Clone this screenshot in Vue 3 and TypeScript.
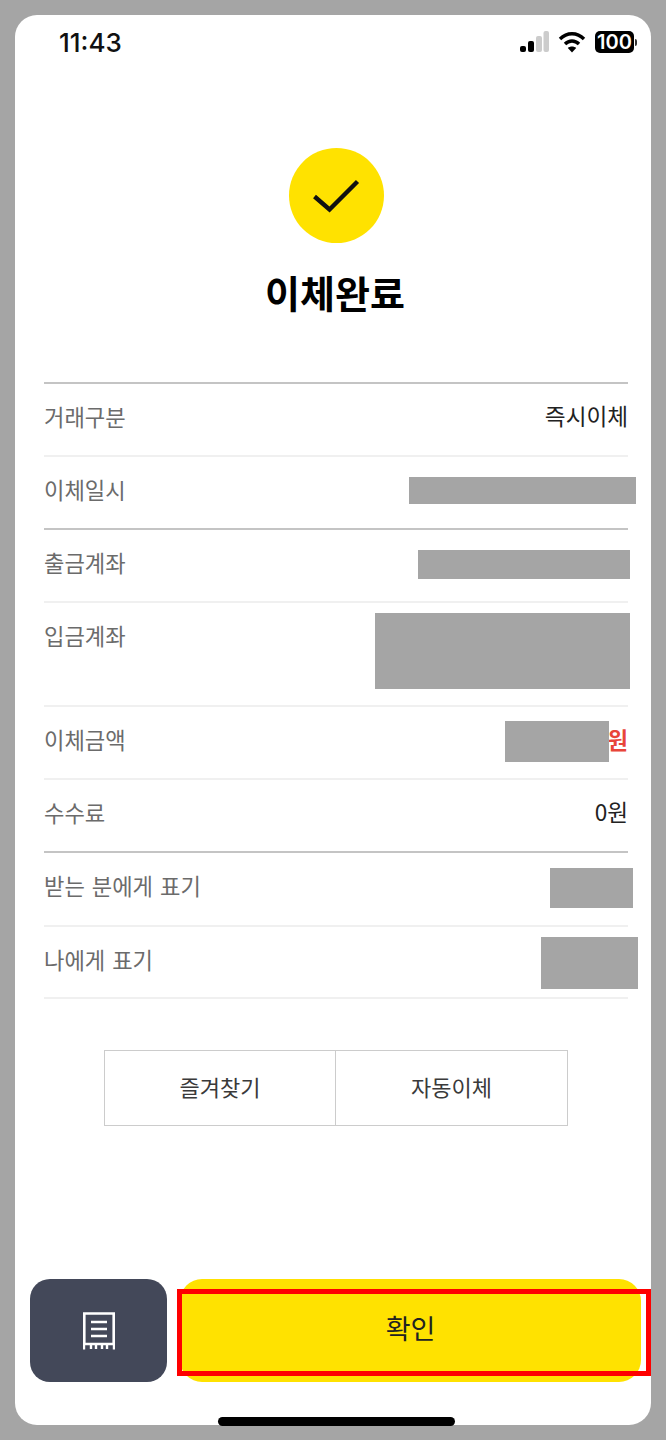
<script setup lang="ts">
interface Row {
  label: string
  value?: string
  tall?: boolean
  strong?: boolean
  line: 'dark' | 'light'
  mask?: 'date' | 'from' | 'to' | 'amount' | 'them' | 'me'
}

const rows: Row[] = [
  { label: '거래구분', value: '즉시이체', line: 'light' },
  { label: '이체일시', mask: 'date', line: 'dark' },
  { label: '출금계좌', mask: 'from', line: 'light' },
  { label: '입금계좌', mask: 'to', tall: true, line: 'light' },
  { label: '이체금액', value: '원', strong: true, mask: 'amount', line: 'light' },
  { label: '수수료', value: '0원', line: 'dark' },
  { label: '받는 분에게 표기', mask: 'them', line: 'light' },
  { label: '나에게 표기', mask: 'me', line: 'light' },
]
</script>

<template>
  <div class="screen">
    <div class="phone">
      <div class="status">
        <span class="time">11:43</span>
        <div class="status-icons">
          <svg width="30" height="22" viewBox="0 0 30 22">
            <rect x="1" y="15" width="6" height="6" rx="2" fill="#000" />
            <rect x="9" y="10" width="6" height="11" rx="2" fill="#000" />
            <rect x="17" y="5" width="6" height="16" rx="2" fill="#ccc" />
            <rect x="24.5" y="0" width="5.5" height="21" rx="2" fill="#ccc" />
          </svg>
          <svg class="wifi" width="28" height="22" viewBox="0 0 28 22">
            <path d="M2 8 C9 1 19 1 26 8" fill="none" stroke="#000" stroke-width="3.4" />
            <path d="M7 13 C11 9 17 9 21 13" fill="none" stroke="#000" stroke-width="3.4" />
            <path d="M14 21.5 L9.8 17 C12 15 16 15 18.2 17 Z" fill="#000" />
          </svg>
          <div class="battery"><span>100</span></div>
          <i class="battery-tip"></i>
        </div>
      </div>

      <div class="check">
        <svg width="50" height="40" viewBox="0 0 50 40">
          <path d="M2.5 20.5 L17.5 33.5 L45.5 5.5" fill="none" stroke="#111" stroke-width="4.4" />
        </svg>
      </div>
      <h1 class="title">이체완료</h1>

      <div class="list">
        <div
          v-for="row in rows"
          :key="row.label"
          class="row"
          :class="[row.line, { tall: row.tall }]"
        >
          <span class="label">{{ row.label }}</span>
          <span v-if="row.value" class="value" :class="{ strong: row.strong }">{{ row.value }}</span>
          <div v-if="row.mask" class="mask" :class="row.mask"></div>
        </div>
      </div>

      <div class="actions">
        <button class="action" type="button">즐겨찾기</button>
        <button class="action" type="button">자동이체</button>
      </div>

      <div class="footer">
        <button class="receipt" type="button">
          <svg width="32" height="38" viewBox="0 0 32 38">
            <path d="M1.3 1.5 H30.7 V32 H1.3 Z" fill="none" stroke="#fff" stroke-width="2.6" />
            <path d="M1 32 V37.5 M8 32 V37 M13 32 V37 M19 32 V37 M24 32 V37 M31 32 V37.5" stroke="#fff" stroke-width="2.4" />
            <path d="M8 10 H24 M8 17 H24 M8 24 H24" stroke="#fff" stroke-width="2.6" />
          </svg>
        </button>
        <button class="confirm" type="button">확인</button>
      </div>

      <div class="home"></div>
    </div>
    <div class="highlight"></div>
  </div>
</template>

<style>
body {
  background: #a5a5a5;
}
</style>

<style scoped>
.screen {
  position: relative;
  width: 666px;
  height: 1440px;
  padding: 15px;
  box-sizing: border-box;
  background: #a5a5a5;
  font-family: "Noto Sans CJK KR", "Noto Sans", sans-serif;
}

.phone {
  position: relative;
  display: flex;
  flex-direction: column;
  height: 1410px;
  background: #fff;
  border-radius: 22px;
}

.status {
  display: flex;
  justify-content: space-between;
  align-items: center;
  height: 54px;
  padding: 0 14px 0 44px;
}

.time {
  font-family: Inter, "Liberation Sans", sans-serif;
  font-size: 26px;
  font-weight: 500;
  color: #111;
}

.status-icons {
  display: flex;
  align-items: center;
}

.wifi {
  margin-left: 9px;
}

.battery {
  display: flex;
  align-items: center;
  justify-content: center;
  width: 39px;
  height: 22px;
  margin-left: 9px;
  background: #000;
  border-radius: 5px;
}

.battery span {
  font-family: Inter, "Liberation Sans", sans-serif;
  font-size: 20px;
  font-weight: 600;
  line-height: 1;
  color: #fff;
}

.battery-tip {
  width: 2px;
  height: 7px;
  margin-left: 1px;
  background: #333;
  border-radius: 0 2px 2px 0;
}

.check {
  display: flex;
  align-items: center;
  justify-content: center;
  align-self: center;
  width: 95px;
  height: 95px;
  margin: 79px 0 0 7px;
  background: #ffe200;
  border-radius: 50%;
}

.title {
  margin: 22px 0 0 4px;
  font-size: 38px;
  font-weight: 700;
  line-height: 54px;
  text-align: center;
  color: #000;
}

.list {
  margin: 63px 23px 0 29px;
  border-top: 2px solid #c4c4c4;
}

.row {
  position: relative;
  display: flex;
  justify-content: space-between;
  align-items: flex-start;
  box-sizing: border-box;
  height: 73px;
  padding-top: 16px;
  font-size: 22.2px;
  line-height: 32px;
  word-spacing: 2px;
  border-bottom: 2px solid #f0f0f0;
}

.row.dark {
  border-bottom-color: #c4c4c4;
}

.row.tall {
  height: 104px;
}

.row:nth-child(7) {
  height: 74px;
}

.row:last-child {
  height: 72px;
}

.label {
  color: #6b6b6b;
}

.value {
  font-size: 22.6px;
  color: #222;
}

.value.strong {
  font-size: 22.2px;
  font-weight: 700;
  color: #e8453a;
}

.mask {
  position: absolute;
  background: #a5a5a5;
}

.mask.date {
  top: 20px;
  right: -8px;
  width: 227px;
  height: 27px;
}

.mask.from {
  top: 20px;
  right: -2px;
  width: 212px;
  height: 29px;
}

.mask.to {
  top: 10px;
  right: -2px;
  width: 255px;
  height: 76px;
}

.mask.amount {
  top: 14px;
  right: 19px;
  width: 104px;
  height: 41px;
}

.mask.them {
  top: 15px;
  right: -5px;
  width: 83px;
  height: 40px;
}

.mask.me {
  top: 10px;
  right: -10px;
  width: 97px;
  height: 52px;
}

.actions {
  display: flex;
  align-self: flex-start;
  width: 464px;
  height: 76px;
  margin: 51px 0 0 89px;
  box-sizing: border-box;
  border: 1px solid #ccc;
}

.action {
  padding: 0 0 4px;
  font-family: inherit;
  font-size: 22px;
  color: #3a3a3a;
  background: #fff;
  border: none;
}

.action:first-child {
  width: 230px;
}

.action + .action {
  flex: 1;
  border-left: 1px solid #ccc;
}

.footer {
  display: flex;
  gap: 13px;
  height: 103px;
  margin: auto 10px 43px 15px;
}

.receipt {
  display: flex;
  align-items: center;
  justify-content: center;
  width: 137px;
  padding: 0;
  background: #434859;
  border: none;
  border-radius: 20px;
}

.confirm {
  flex: 1;
  padding: 0 0 6px;
  font-family: inherit;
  font-size: 27px;
  color: #222;
  background: #ffe200;
  border: none;
  border-radius: 22px;
}

.home {
  position: absolute;
  left: 203px;
  bottom: -1px;
  width: 237px;
  height: 9px;
  background: #000;
  border-radius: 5px;
}

.highlight {
  position: absolute;
  left: 177px;
  top: 1289px;
  width: 474px;
  height: 87px;
  box-sizing: border-box;
  border: 5px solid #f00;
}
</style>
